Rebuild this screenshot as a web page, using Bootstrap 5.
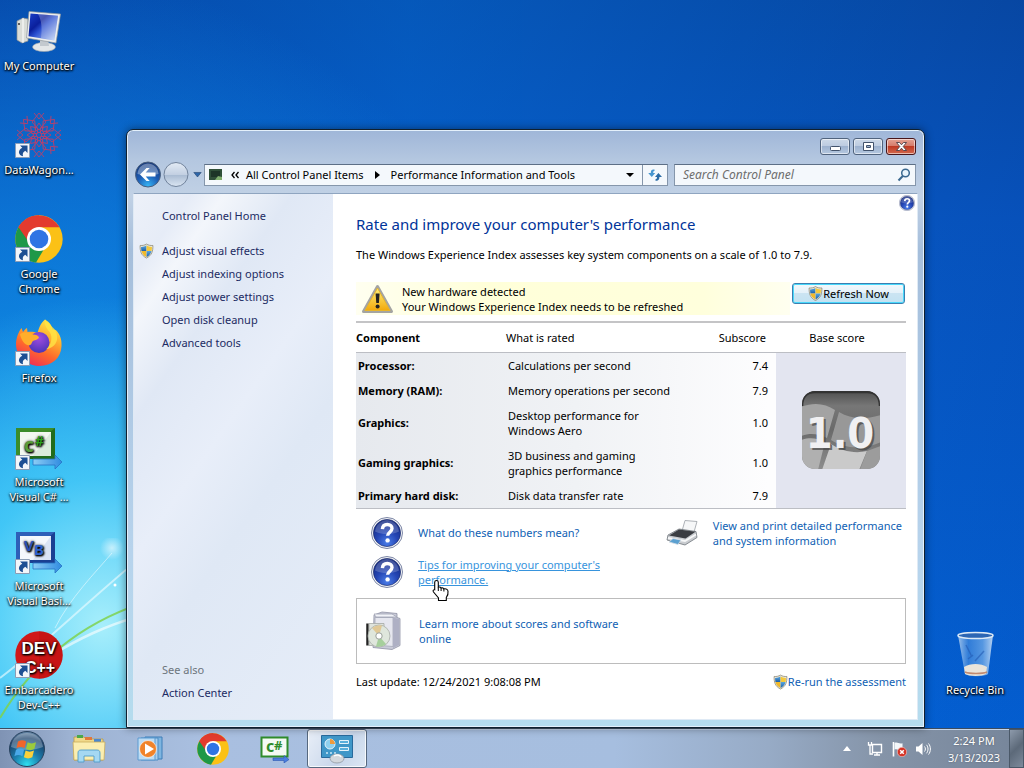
<!DOCTYPE html>
<html lang="en">
<head>
<meta charset="utf-8">
<meta name="viewport" content="width=device-width, initial-scale=1">
<title>Performance Information and Tools</title>
<link href="https://cdn.jsdelivr.net/npm/bootstrap@5.3.0/dist/css/bootstrap.min.css" rel="stylesheet">
<style>
  body { font-family: "Noto Sans", "Open Sans", sans-serif; font-size: 11px; line-height: 15px; color: #000; background: #0a57b8; }
  a { color: #0f5fb4; text-decoration: none; }
  a:hover, a.hovered { color: #3794dd; text-decoration: underline; }
  svg { display: block; flex: none; }
  svg text { font-family: "Noto Sans", sans-serif; }

  /* desktop */
  .wallpaper {
    background:
      radial-gradient(ellipse 300px 330px at 10% 86%, rgba(175,242,252,.95), rgba(80,210,250,.75) 45%, rgba(30,170,245,0) 100%),
      radial-gradient(ellipse 560px 640px at 4% 84%, #1cb4f2, rgba(16,140,228,.8) 45%, rgba(10,90,200,0) 100%),
      linear-gradient(90deg, rgba(0,70,180,.3), rgba(0,110,220,.35) 40%, rgba(0,40,130,.15) 100%),
      linear-gradient(180deg, #084ca8, #0858c4 30%, #0466dc 100%);
  }
  .streaks { left: 0; bottom: 0; width: 140px; height: 190px; }
  .icon-col { width: 78px; }
  .bin-col { margin-right: 10px; }
  .desk-icon { height: 104px; padding-top: 7px; color: #fff; text-align: center; text-shadow: 1px 1px 2px #000, 0 1px 2px #000, 0 0 3px rgba(0,0,0,.6); }
  .desk-icon:hover { color: #fff; text-decoration: none; }
  .desk-icon svg { margin: 0 auto 3px; }
  .desk-icon span { white-space: nowrap; }
  .dev-logo text { font-family: "Liberation Sans", sans-serif; }

  /* window */
  .win {
    left: 126px; right: 99px; top: 129px; bottom: 0;
    border: 1px solid #10202f; border-radius: 7px 7px 0 0;
    box-shadow: inset 0 0 0 1px #e4f0fb, 0 0 8px rgba(0,0,0,.45);
    background: linear-gradient(180deg, #9fb6d8 0, #b4c7e0 30px, #c1d1e5 66px, #a5bedb 120px, #b7d3ec 420px, #b5dcee 100%);
    padding: 0 6px 7px;
  }
  .caption-row { height: 30px; padding: 8px 2px 0; gap: 3px; }
  .cap-btn {
    width: 30px; height: 17px; padding: 0; border: 1px solid #50637d; border-radius: 3px;
    background: linear-gradient(#cdd9e8, #bccbe0 48%, #9db2cf 50%, #b5c8e0); box-shadow: inset 0 0 0 1px rgba(255,255,255,.55);
  }
  .cap-close { border-color: #47161b; background: linear-gradient(#e5a394, #d57a69 48%, #bf3a24 50%, #d2694e); }
  .nav-row { height: 33px; padding: 0 2px 4px 1px; }
  .nav-row button { border: 0; background: none; padding: 0; }
  .addr, .srch { height: 22px; border: 1px solid #8596ab; border-top-color: #5d6f86; background: #f4f8fc; }
  .addr { flex: 1 1 auto; margin-left: 2px; }
  .addr ol { gap: 7px; }
  .addr a { color: #000; }
  .addr .go { width: 25px; height: 20px; border-left: 1px solid #8596ab; }
  .srch { flex: 0 0 242px; margin-left: 6px; padding: 0 4px 0 8px; }
  .srch input { width: 100%; min-width: 0; border: 0; background: none; padding: 0; outline: 0; font-style: italic; font-size: 12px; }
  .srch input::placeholder { color: #6d6d6d; opacity: 1; }

  .client { background: #fff; border: 1px solid #dfeaf5; border-top-color: #8fa5c0; }
  .side {
    flex: 0 0 199px; padding: 14px 12px 19px 5px;
    background: linear-gradient(125deg, #edf1f9 0, #e6ecf7 10%, #f3f6fb 16%, #e0e8f5 28%, #e8eef9 45%, #dfe8f5 60%, #e6edf8 100%);
  }
  .side a { color: #1c2b63; }
  .side li { display: flex; gap: 8px; height: 23px; align-items: center; }
  .side li::before { content: ""; width: 15px; }
  .side li.shielded::before { display: none; }
  .side .indent { padding-left: 23px; }

  .page { flex: 1 1 auto; min-width: 0; padding: 19px 11px 0 23px; }
  .page h1 { font-size: 15px; line-height: 22px; color: #003399; margin: 0 0 12px; font-weight: 400; }
  .help-corner { right: 2px; top: 1px; padding: 0; border: 0; background: none; }
  .notice { background: linear-gradient(90deg, #fffff0, #ffffd9 30%, #ffffdc 80%, #fffff0); height: 33px; padding-left: 5px; gap: 8px; }
  .refresh {
    width: 113px; height: 21px; padding: 0; line-height: 15px; color: #000; margin: 1px 1px 0 2px;
    border: 1px solid #3c7fb1; border-radius: 3px; box-shadow: inset 0 0 0 1px #48d8fb;
    background: linear-gradient(#f2f8fc, #e4f1f9 48%, #cbe4f2 50%, #c2e2f2);
  }
  .scores { width: 100%; margin: 6px 0 0; border-top: 2px solid #c4c4c6; border-bottom: 1px solid #bcbec4; table-layout: fixed; }
  .scores thead th { font-weight: 400; height: 30px; padding: 0; border-bottom: 1px solid #bcbec4; }
  .scores thead th:first-child { font-weight: 700; }
  .scores tbody { background: linear-gradient(90deg, #e6e9ee 0, #f0f2f5 40%, #fdfdfe 75%); }
  .scores tbody th, .scores tbody td { padding: 5px 0 5px 2px; vertical-align: middle; }
  .scores tbody th { font-weight: 700; }
  .scores .num { text-align: right; padding-right: 10px; }
  .scores tbody .num { padding-right: 8px; }
  .scores tbody .base { background: #e3e5f0; padding: 0; }
  .scores .base text { font-family: "DejaVu Sans Condensed", "DejaVu Sans", sans-serif; }
  .links { padding: 8px 0 0 15px; }
  .tip-link { height: 32px; gap: 15px; margin-bottom: 7px; }
  .more-box { border: 1px solid #bcbcbc; height: 66px; margin-top: 3px; padding-left: 6px; gap: 12px; }
  .status-row { margin-top: 10px; }
  .pointer { left: 14px; top: 22px; }

  /* taskbar */
  .taskbar { height: 40px; border-top: 1px solid #3c4c60; box-shadow: inset 0 1px 0 #c6d6ea; background: linear-gradient(90deg, #7f93b4 0, #9db2d2 70px, #a9bfe0 200px, #a6bedf 60%, #97abc6 75%, #8594a8 86%, #76859a 100%); }
  .taskbar button { border: 0; background: none; padding: 0; }
  .start { width: 54px; margin-right: 5px; }
  .taskbar .task { width: 60px; height: 39px; margin-right: 2px; }
  .taskbar .task.active-task { border: 1px solid #56687f; border-radius: 3px; box-shadow: inset 0 0 0 1px rgba(255,255,255,.8); background: linear-gradient(120deg, #e9eff8, #c8d6ea 60%, #dce7f4); }
  .clock { color: #fff; width: 70px; line-height: 17px; text-align: center; text-shadow: 0 0 2px rgba(0,0,0,.35); }
  .taskbar .peek { width: 15px; height: 39px; border: 1px solid #4a5868; background: linear-gradient(135deg, #8d9aab, #5c6979 50%, #7d8a9b); }
</style>
</head>
<body>

<svg width="0" height="0" class="position-absolute" aria-hidden="true">
  <defs>
    <linearGradient id="gShieldB" x1="0" y1="0" x2="0" y2="1"><stop offset="0" stop-color="#5aa7e0"/><stop offset="1" stop-color="#1b5ea8"/></linearGradient>
    <radialGradient id="gHelp" cx=".5" cy=".85" r=".8"><stop offset="0" stop-color="#4a7de8"/><stop offset=".5" stop-color="#2445b4"/><stop offset="1" stop-color="#152a80"/></radialGradient>
    <radialGradient id="gBack" cx=".5" cy=".95" r=".9"><stop offset="0" stop-color="#35b4f5"/><stop offset=".5" stop-color="#1d5cb4"/><stop offset="1" stop-color="#173a7c"/></radialGradient>
    <linearGradient id="gFwd" x1="0" y1="0" x2="0" y2="1"><stop offset="0" stop-color="#e3ebf5"/><stop offset=".5" stop-color="#c3d0e2"/><stop offset=".52" stop-color="#a9bbd2"/><stop offset="1" stop-color="#dbe6f3"/></linearGradient>
    <linearGradient id="gScreen" x1="0" y1="0" x2="1" y2="1"><stop offset="0" stop-color="#1a3fc8"/><stop offset=".35" stop-color="#0a1f9c"/><stop offset=".5" stop-color="#2b50d0"/><stop offset="1" stop-color="#c9dcf8"/></linearGradient>
    <linearGradient id="gFox" x1=".8" y1="0" x2=".3" y2="1"><stop offset="0" stop-color="#fff04a"/><stop offset=".35" stop-color="#ffb02e"/><stop offset=".65" stop-color="#ff6a2b"/><stop offset="1" stop-color="#ee2c58"/></linearGradient>
    <radialGradient id="gGlobe" cx=".5" cy=".3" r=".7"><stop offset="0" stop-color="#a04be0"/><stop offset="1" stop-color="#4a35b8"/></radialGradient>
    <linearGradient id="gTile" x1="0" y1="0" x2="0" y2="1"><stop offset="0" stop-color="#4c4c4c"/><stop offset=".2" stop-color="#777"/><stop offset=".5" stop-color="#6a6a6a"/><stop offset="1" stop-color="#8d8d8d"/></linearGradient>
    <linearGradient id="gArrow" x1="0" y1="0" x2="1" y2="0"><stop offset="0" stop-color="#8ccdf5"/><stop offset="1" stop-color="#2f8be0"/></linearGradient>
    <radialGradient id="gOrb" cx=".5" cy=".95" r=".95"><stop offset="0" stop-color="#2fe0f0"/><stop offset=".4" stop-color="#1c7fae"/><stop offset=".8" stop-color="#1a3f68"/><stop offset="1" stop-color="#6f8fae"/></radialGradient>
    <radialGradient id="gGlow"><stop offset="0" stop-color="#fff" stop-opacity=".6"/><stop offset="1" stop-color="#fff" stop-opacity="0"/></radialGradient>
    <linearGradient id="gWarn" x1="0" y1="0" x2="0" y2="1"><stop offset="0" stop-color="#fff07a"/><stop offset="1" stop-color="#f2a90c"/></linearGradient>
    <linearGradient id="gBin" x1="0" y1="0" x2="1" y2="0"><stop offset="0" stop-color="#b9d4f0" stop-opacity=".85"/><stop offset=".3" stop-color="#4f93e0" stop-opacity=".6"/><stop offset=".7" stop-color="#78b0ea" stop-opacity=".7"/><stop offset="1" stop-color="#d5e6f8" stop-opacity=".85"/></linearGradient>
  </defs>
  <symbol id="shield" viewBox="0 0 16 16">
    <path d="M8 .6c2 1.300 4.300 1.700 6.800 1.500.2 6-1 10.500-6.800 13.400C2.200 12.600 1 8.100 1.200 2.100 3.700 2.300 6 1.900 8 .6z" fill="#e9e6da" stroke="#8a8672" stroke-width=".8"/>
    <path d="M7.900 2.200v5.800H2.600c-.3-1.400-.4-2.800-.4-4.300 2.200.1 4-.4 5.700-1.500z" fill="url(#gShieldB)"/>
    <path d="M8.100 2.200v5.800h5.300c.3-1.400.4-2.800.4-4.300-2.200.1-4-.4-5.700-1.500z" fill="#f4c93c"/>
    <path d="M7.900 8H2.600c.8 3 2.400 4.900 5.300 6.400z" fill="#f0b92b"/>
    <path d="M8.100 8h5.300c-.8 3-2.400 4.900-5.300 6.400z" fill="url(#gShieldB)"/>
  </symbol>
  <symbol id="help" viewBox="0 0 32 32">
    <circle cx="16" cy="16" r="15.500" fill="#f4f5f8" stroke="#7d87a6"/>
    <circle cx="16" cy="16" r="13.600" fill="url(#gHelp)" stroke="#14245f" stroke-width=".6"/>
    <path d="M4 14.500C5 7 11 3 16 3s11 4 12 11.500c-8 3.500-16 3.500-24 0z" fill="#fff" opacity=".2"/>
    <path d="M11.400 12.200c.2-3 2-4.700 4.900-4.700 2.800 0 4.700 1.600 4.700 4 0 3.600-4.400 3.800-4.400 7.300" fill="none" stroke="#fff" stroke-width="3.400"/>
    <circle cx="16.600" cy="23.400" r="2.200" fill="#fff"/>
  </symbol>
  <symbol id="shortcut" viewBox="0 0 15 15">
    <path d="M.5.500h14v14H.5z" fill="#f3f6fa" stroke="#8c9db5"/>
    <path d="M5 2.500H12.500V10L10.300 7.800C8.300 8.800 7.300 10.500 8 13.200 3.300 12.400 2.200 7.500 7.300 4.800z" fill="#1d4f93"/>
  </symbol>
  <symbol id="chrome" viewBox="0 0 48 48">
    <circle cx="24" cy="24" r="23.700" fill="#fbc116"/>
    <path d="M24 24 3.500 12.200A23.700 23.700 0 0 0 21 47.500L31.500 30z" fill="#1e9848"/>
    <path d="M24 24 3.500 12.200A23.700 23.700 0 0 1 44.500 12.300H24z" fill="#e33b2e"/>
    <path d="M3.500 12.200 14 30 24 24z" fill="#1e9848"/>
    <path d="M3.500 12.200A23.700 23.700 0 0 1 24 .3l0 12-10.400 6.200-.2 8z" fill="#e33b2e"/>
    <circle cx="24" cy="24" r="12" fill="#fff"/><circle cx="24" cy="24" r="9.300" fill="#2f74e4"/>
  </symbol>
</svg>

<div class="d-flex flex-column vh-100 overflow-hidden">
  <main class="wallpaper position-relative flex-grow-1 d-flex justify-content-between">
    <svg class="streaks position-absolute" viewBox="0 0 140 190" aria-hidden="true">
      <path d="M0 140C40 110 80 70 140 20" stroke="#e8fbff" stroke-width="2" fill="none" opacity=".65"/>
      <path d="M50 118C80 100 105 88 140 78" stroke="#fff" stroke-width="2.500" fill="none" opacity=".6"/>
      <path d="M0 180C30 130 75 88 140 66" stroke="#7fd24e" stroke-width="2" fill="none" opacity=".85"/>
      <path d="M55 90C70 60 95 35 112 15" stroke="#fff" stroke-width="1" fill="none" opacity=".5"/>
      <circle cx="112" cy="10" r="12" fill="url(#gGlow)"/><circle cx="115" cy="47" r="1.500" fill="#fff"/>
    </svg>

    <nav class="icon-col position-relative" aria-label="Desktop">
      <a href="#" class="desk-icon d-block">
        <svg width="48" height="48" viewBox="0 0 48 48">
          <path d="M2 14 8 11l5 1v22l-6 2-5-3z" fill="#d9dcd8" stroke="#8b8f90" stroke-width=".7"/><path d="M8 11v25" stroke="#fff"/><circle cx="4" cy="17" r="1" fill="#333"/>
          <ellipse cx="29" cy="40" rx="11.500" ry="4.500" fill="#e4e7e8" stroke="#9aa3aa" stroke-width=".6"/><path d="M25 32h8l1 7h-9z" fill="#c3c9ce"/>
          <path d="M14 4.500 45.500 7 41 36 11.500 31z" fill="#eceeee" stroke="#8f969c" stroke-width=".7"/>
          <path d="M15.500 6.500 43 8.700 39.300 33.500 13.500 29.200z" fill="url(#gScreen)"/>
          <path d="M23 7c4 7 4 15 3 24l13 2.300L43 8.700z" fill="#fff" opacity=".25"/>
        </svg><span>My Computer</span></a>
      <a href="#" class="desk-icon d-block">
        <svg width="48" height="48" viewBox="0 0 48 48" fill="none" stroke="#b8406c" stroke-width=".9">
          <g id="petals"><path d="M24 2 31 11 24 19 17 11zM24 12l4 6-4 4-4-4zM19 2l5 6 5-6"/></g>
          <use href="#petals" transform="rotate(45 24 24)"/><use href="#petals" transform="rotate(90 24 24)"/><use href="#petals" transform="rotate(135 24 24)"/><use href="#petals" transform="rotate(180 24 24)"/><use href="#petals" transform="rotate(225 24 24)"/><use href="#petals" transform="rotate(270 24 24)"/><use href="#petals" transform="rotate(315 24 24)"/>
          <use href="#shortcut" x="0" y="32" width="15" height="15" stroke="none"/>
        </svg><span>DataWagon...</span></a>
      <a href="#" class="desk-icon d-block">
        <svg width="48" height="48" viewBox="0 0 48 48"><use href="#chrome" width="48" height="48"/><use href="#shortcut" x="0" y="32" width="15" height="15"/></svg><span>Google<br>Chrome</span></a>
      <a href="#" class="desk-icon d-block">
        <svg width="48" height="48" viewBox="0 0 48 48">
          <path d="M30 .5c5 3 7 6.500 7.500 10 1.500-.3 2.500 0 3.500.8 4 4 6 9 5.500 16C46 39 37 47 24.500 47S1 37.500 1 25.500C1 19 3.500 13 6.500 9l1.500 4c1-1.500 2.500-3 4-4l.5 4c3-.5 7-.3 10 1C24 9 25.500 4 30 .5z" fill="url(#gFox)"/>
          <circle cx="24" cy="23.500" r="10.500" fill="url(#gGlobe)"/>
          <path d="M5 15c4-2.500 10-2 13 .5 3 0 5.500 1 6 3-1 2.500-5 2.500-6.500 4-1 1.300-.7 3-2.500 3.500C11 28 6 21 5 15z" fill="#ffae2b"/>
          <path d="M30 .5c-1 6 2 9 5 13 3 5 1 13-4 17 9-2 12-8 11-14C41 9 36 8 30 .5z" fill="#ffe545" opacity=".8"/>
          <use href="#shortcut" x="0" y="32" width="15" height="15"/>
        </svg><span>Firefox</span></a>
      <a href="#" class="desk-icon d-block">
        <svg width="48" height="48" viewBox="0 0 48 48">
          <path d="M1 5h39v31H1z" fill="#3b8c2a"/><path d="M40 5v31H1z" fill="#236b1c"/><path d="M5 9h31v24H5z" fill="#f2f8f0"/><path d="M36 9v24H18z" fill="#dcebdc"/>
          <text x="9" y="29" font-size="19" font-weight="700" fill="#5a9c3a">c</text><text x="20" y="23" font-size="14" font-weight="700" fill="#2fa01e">#</text>
          <path d="M18 36h22v-4l7 7-7 7v-4H18z" fill="url(#gArrow)" stroke="#2774c4" stroke-width=".8"/>
          <use href="#shortcut" x="0" y="32" width="15" height="15"/>
        </svg><span>Microsoft<br>Visual C# ...</span></a>
      <a href="#" class="desk-icon d-block">
        <svg width="48" height="48" viewBox="0 0 48 48">
          <path d="M1 5h39v31H1z" fill="#2e5fb8"/><path d="M40 5v31H1z" fill="#1a3f92"/><path d="M5 9h31v24H5z" fill="#f4f7fc"/><path d="M36 9v24H18z" fill="#dbe4f4"/>
          <text x="9" y="24" font-size="15" font-weight="700" fill="#2b50b4">V</text><text x="19" y="28" font-size="15" font-weight="700" fill="#2f62cc">B</text>
          <path d="M18 36h22v-4l7 7-7 7v-4H18z" fill="url(#gArrow)" stroke="#2774c4" stroke-width=".8"/>
          <use href="#shortcut" x="0" y="32" width="15" height="15"/>
        </svg><span>Microsoft<br>Visual Basi...</span></a>
      <a href="#" class="desk-icon d-block">
        <svg class="dev-logo" width="48" height="48" viewBox="0 0 48 48">
          <circle cx="24" cy="24" r="23.700" fill="#d01818"/><path d="M24 .3a23.700 23.700 0 0 1 0 47.400z" fill="#b81010" opacity=".4"/>
          <text x="24" y="23" font-size="17" font-weight="700" fill="#fff" text-anchor="middle">DEV</text><text x="25" y="42" font-size="16" font-weight="700" fill="#fff" text-anchor="middle">C++</text>
          <use href="#shortcut" x="0" y="32" width="15" height="15"/>
        </svg><span>Embarcadero<br>Dev-C++</span></a>
    </nav>

    <nav class="icon-col bin-col align-self-end" aria-label="Recycle">
      <a href="#" class="desk-icon d-block">
        <svg width="48" height="48" viewBox="0 0 48 48">
          <path d="M7 4h35l-5 39c-3 3-20 3-23 0z" fill="url(#gBin)"/>
          <path d="M13 36c6-4 17-4 23 0l-1 7c-4 2.500-17 2.500-21 0z" fill="#e9e4da"/>
          <path d="M14 41c5 2 17 2 22 0" stroke="#c08a70" stroke-width="1.500" fill="none"/>
          <ellipse cx="24.500" cy="4.500" rx="17.500" ry="3" fill="#2c66b4" stroke="#dce9f6" stroke-width="1.500"/>
          <path d="M15 14l6 12M33 20l-9 10M17 28l5-4" stroke="#245cb4" stroke-width="1.500" opacity=".6"/>
        </svg><span>Recycle Bin</span></a>
    </nav>

    <section class="win position-absolute d-flex flex-column" aria-label="Performance Information and Tools">
      <div class="caption-row d-flex justify-content-end">
        <button class="cap-btn" type="button" aria-label="Minimize"><svg width="28" height="15"><rect x="9.500" y="7.500" width="10" height="4" rx="1" fill="#fff" stroke="#42536c"/></svg></button>
        <button class="cap-btn" type="button" aria-label="Maximize"><svg width="28" height="15"><path d="M9.500 3.500h10v8h-10zM12.500 6.500h4v2h-4z" fill="#fff" fill-rule="evenodd" stroke="#42536c"/></svg></button>
        <button class="cap-btn cap-close" type="button" aria-label="Close"><svg width="28" height="15"><path d="M9.500 3.500h3l2 2.300 2-2.300h3l-3.300 4 3.300 4h-3l-2-2.300-2 2.300h-3l3.300-4z" fill="#fff" stroke="#4d4046" stroke-width=".9"/></svg></button>
      </div>
      <div class="nav-row d-flex align-items-center">
        <button type="button" aria-label="Back"><svg width="28" height="27" viewBox="0 0 28 27"><circle cx="14" cy="13.500" r="12.500" fill="url(#gBack)" stroke="#4a5f7e"/><path d="M3.500 13C4 6 9 2.500 14 2.500S24 6 24.500 13c-7 2-14 2-21 0z" fill="#fff" opacity=".35"/><path d="M6 13.500l6.500-6.500h3.200l-4 4.500h9.800v4h-9.800l4 4.500h-3.200z" fill="#fff"/></svg></button>
        <button type="button" aria-label="Forward"><svg width="27" height="27" viewBox="0 0 27 27"><circle cx="14" cy="13.500" r="12" fill="url(#gFwd)" stroke="#71839c"/></svg></button>
        <button type="button" class="ms-1" aria-label="Recent pages"><svg width="9" height="7" viewBox="0 0 11 8"><path d="M1 1.500h9L5.500 7z" fill="#2c65a8" stroke="#2a4a74" stroke-width=".8"/></svg></button>
        <div class="addr d-flex align-items-center">
          <svg width="14" height="12" viewBox="0 0 14 12" class="ms-1 me-2"><path d="M0 0h13v11H0z" fill="#2f4f38"/><path d="M2 2h9v6H2z" fill="#1d3527"/><path d="M6 11l3-4 4 1v3z" fill="#7fae6d"/></svg>
          <ol class="d-flex align-items-center list-unstyled mb-0 flex-grow-1 text-nowrap">
            <li><svg width="8" height="8" viewBox="0 0 8 8" role="img" aria-label="More"><path d="M3.500 1 1 4l2.500 3M7.500 1 5 4l2.500 3" fill="none" stroke="#000" stroke-width="1.300"/></svg></li>
            <li><a href="#">All Control Panel Items</a></li>
            <li class="px-1"><svg width="5" height="8"><path d="M0 0l5 4-5 4z"/></svg></li>
            <li><a href="#">Performance Information and Tools</a></li>
          </ol>
          <button type="button" class="me-1 pe-1" aria-label="Previous locations"><svg width="8" height="4"><path d="M0 0h8L4 4z"/></svg></button>
          <button type="button" class="go d-flex align-items-center justify-content-center" aria-label="Refresh"><svg width="16" height="14" viewBox="0 0 16 14"><path d="M7.500 1.500C5 1 3.800 2 3.800 5H1.200l3.600 4 3.400-4H6.200c0-1.500.3-2 1.300-2z" fill="#4796cf"/><path d="M8.500 12.700c2.500.5 3.900-.7 3.900-3.700H15l-3.600-4L8 9h2c0 1.500-.4 2.200-1.500 2.200z" fill="#2a6ba6"/></svg></button>
        </div>
        <div class="srch d-flex align-items-center">
          <input type="search" placeholder="Search Control Panel" aria-label="Search Control Panel">
          <svg width="14" height="14" viewBox="0 0 14 14"><circle cx="8.500" cy="5" r="3.800" fill="#e8f4fc" stroke="#3a688f" stroke-width="1.500"/><path d="M5.800 8 1.500 12.500" stroke="#3a688f" stroke-width="2"/></svg>
        </div>
      </div>

      <div class="client d-flex flex-grow-1 position-relative">
        <aside class="side d-flex flex-column justify-content-between">
          <div>
            <a href="#" class="indent d-block mb-3">Control Panel Home</a>
            <ul class="list-unstyled mb-0">
              <li class="shielded"><svg width="15" height="16"><use href="#shield" width="15" height="16"/></svg><a href="#">Adjust visual effects</a></li>
              <li><a href="#">Adjust indexing options</a></li>
              <li><a href="#">Adjust power settings</a></li>
              <li><a href="#">Open disk cleanup</a></li>
              <li><a href="#">Advanced tools</a></li>
            </ul>
          </div>
          <div class="indent"><div class="text-secondary mb-2">See also</div><a href="#">Action Center</a></div>
        </aside>

        <article class="page">
          <button class="help-corner position-absolute" type="button" aria-label="Help"><svg width="16" height="16"><use href="#help" width="16" height="16"/></svg></button>
          <h1>Rate and improve your computer's performance</h1>
          <p class="mb-0">The Windows Experience Index assesses key system components on a scale of 1.0 to 7.9.</p>
          <div class="d-flex align-items-start mt-3 pt-1">
            <div class="notice d-flex align-items-center flex-grow-1">
              <svg width="33" height="30" viewBox="0 0 33 30"><path d="M16.500 2.500 30.500 27.500h-28z" fill="#fff" stroke="#a4a4a2" stroke-width="3" stroke-linejoin="round"/><path d="M16.500 4 29 26.500H4z" fill="url(#gWarn)" stroke="#e8b52a" stroke-linejoin="round"/><path d="M14.600 9.500h4l-.7 9.500h-2.600z" fill="#222"/><circle cx="16.600" cy="22.500" r="2" fill="#222"/></svg>
              <div>New hardware detected<br>Your Windows Experience Index needs to be refreshed</div>
            </div>
            <button class="refresh d-flex align-items-center justify-content-center" type="button"><svg width="15" height="15"><use href="#shield" width="15" height="15"/></svg>Refresh Now</button>
          </div>

          <table class="scores">
            <colgroup><col style="width:150px"><col><col style="width:70px"><col style="width:130px"></colgroup>
            <thead><tr><th scope="col">Component</th><th scope="col">What is rated</th><th scope="col" class="num">Subscore</th><th scope="col" class="text-center pe-2">Base score</th></tr></thead>
            <tbody>
              <tr><th scope="row">Processor:</th><td>Calculations per second</td><td class="num">7.4</td>
                <td class="base" rowspan="5">
                  <svg class="mx-auto" width="80" height="80" viewBox="0 0 80 80" role="img" aria-label="Base score 1.0">
                    <clipPath id="tileClip"><rect x="1" y="1" width="78" height="78" rx="13"/></clipPath>
                    <g clip-path="url(#tileClip)">
                      <path d="M0 0h80v80H0z" fill="url(#gTile)"/>
                      <path d="M0 17C12 12 24 13 34 20L26 48C16 43 8 43 0 46z" fill="#a3a3a3"/><path d="M0 50c9-3 16-2 24 2L17 80H0z" fill="#b0b0b0"/>
                      <path d="M38 22c12 7 24 8 42 3v27c-18 8-36 7-50-2z" fill="#989898"/><path d="M30 54c10 7 24 10 36 7l-8 19H21z" fill="#cacaca"/>
                      <path d="M66 61l14-5v24H59z" fill="#9c9c9c"/>
                      <path d="M1 16C1 6 7 2 14 2h52c8 0 13 5 13 14" fill="none" stroke="#333" stroke-width="2.500"/>
                    </g>
                    <text x="41" y="60" font-size="43" font-weight="700" fill="#444" text-anchor="middle" opacity=".7">1.0</text>
                    <text x="39" y="58" font-size="43" font-weight="700" fill="#f0f0f2" text-anchor="middle">1.0</text>
                  </svg>
                </td></tr>
              <tr><th scope="row">Memory (RAM):</th><td>Memory operations per second</td><td class="num">7.9</td></tr>
              <tr><th scope="row">Graphics:</th><td>Desktop performance for<br>Windows Aero</td><td class="num">1.0</td></tr>
              <tr><th scope="row">Gaming graphics:</th><td>3D business and gaming<br>graphics performance</td><td class="num">1.0</td></tr>
              <tr><th scope="row">Primary hard disk:</th><td>Disk data transfer rate</td><td class="num">7.9</td></tr>
            </tbody>
          </table>

          <div class="links d-flex justify-content-between align-items-start">
            <div>
              <div class="tip-link d-flex align-items-center"><svg width="32" height="32"><use href="#help" width="32" height="32"/></svg><a href="#">What do these numbers mean?</a></div>
              <div class="tip-link d-flex align-items-center">
                <svg width="32" height="32"><use href="#help" width="32" height="32"/></svg>
                <div class="position-relative"><a href="#" class="hovered">Tips for improving your computer's<br>performance.</a>
                  <svg class="pointer position-absolute" width="18" height="23" viewBox="0 0 18 23" aria-hidden="true"><path d="M4.500 1.500c1.200 0 1.800.6 1.800 1.800v5c1.200-.5 2.200-.3 2.800.7 1-.4 2-.1 2.600.9 1.300-.4 3.800-.2 4.300 2.100.3 2-.2 4.500-1.700 6.500v3H6.500v-2.500L1.500 13C.6 11.700 1.300 10.500 2.700 10.800V3.300c0-1.200.6-1.800 1.800-1.800z" fill="#fff" stroke="#000" stroke-width="1.100"/><path d="M6.300 8.500v3.500M9.100 9v3M11.900 10v2.500" stroke="#000"/></svg>
                </div>
              </div>
            </div>
            <div class="tip-link d-flex align-items-center me-1">
              <svg width="32" height="28" viewBox="0 0 32 28"><path d="M16 12 19 1.500l12 1L28 13z" fill="#f6f7f8" stroke="#9aa0a6" stroke-width=".8"/><path d="M2 16 13 10l17 2.500 1 6-12 7.500L1 21z" fill="#c9ccd0" stroke="#6f757b" stroke-width=".8"/><path d="M3 16.500 13 10.500l16.500 2.300-10 6.700z" fill="#3a3d42"/><path d="M2 19l17 3 11-6.500" stroke="#f7f8f9" stroke-width="1.800" fill="none"/><path d="M7 19.500l8 1.500-3 4.500-9-2.500z" fill="#5ba0d0" stroke="#d5dde4" stroke-width=".8"/></svg>
              <a href="#">View and print detailed performance<br>and system information</a>
            </div>
          </div>

          <div class="more-box d-flex align-items-center">
            <svg width="44" height="42" viewBox="0 0 44 42"><path d="M11 5 19 2l15 1.500v4l3 1v27l-8 4-19-2z" fill="#c9cbd8" stroke="#8f92a4" stroke-width=".8"/><path d="M12 7.500h18v29l-18-1.500z" fill="#e6e7ef" stroke="#a5a8b8" stroke-width=".8"/><path d="M30 7.500l6 1.500v26l-6 3z" fill="#aeb0c4"/><path d="M11 4h18l5 3H13z" fill="#f2f3f8" stroke="#9fa2b2" stroke-width=".8"/><path d="M4.500 13.500v22" stroke="#222" stroke-width="2.500"/><path d="M6 13.500h15v22H6z" fill="#dfe3dc" stroke="#a4a8a4" stroke-width=".8"/><circle cx="16" cy="26" r="11" fill="#dfe6dc" stroke="#a7aca7" stroke-width=".8"/><path d="M16 26 9 18a11 11 0 0 1 10-2.500z" fill="#e0c896"/><path d="M16 26l7 8a11 11 0 0 1-10 2.500z" fill="#a6cf9c"/><circle cx="16" cy="26" r="3.200" fill="#fff" stroke="#9a9f9a"/></svg>
            <a href="#">Learn more about scores and software<br>online</a>
          </div>
          <div class="status-row d-flex justify-content-between align-items-center">
            <span>Last update: 12/24/2021 9:08:08 PM</span>
            <a href="#" class="d-flex align-items-center"><svg width="15" height="16"><use href="#shield" width="15" height="16"/></svg>Re-run the assessment</a>
          </div>
        </article>
      </div>
    </section>
  </main>

  <footer class="taskbar d-flex align-items-center flex-shrink-0">
    <button class="start d-flex justify-content-center" type="button" aria-label="Start"><svg width="38" height="38" viewBox="0 0 38 38"><circle cx="19" cy="19" r="17.500" fill="url(#gOrb)" stroke="#28425e"/><path d="M3 17C4 8 11 3 19 3s15 5 16 14c-10 4-22 4-32 0z" fill="#fff" opacity=".28"/><path d="M10 11.500c3-1.600 5.500-1.600 8.200 0L16.500 18c-2.700-1.500-5.200-1.500-8 0z" fill="#f0652a"/><path d="M19.600 12.300c2.700 1.500 5.400 1.500 8.400 0L26.400 19c-2.900 1.500-5.700 1.500-8.400 0z" fill="#9bcb3c"/><path d="M8 19.700c2.800-1.500 5.400-1.500 8.100 0l-1.700 6.500c-2.700-1.500-5.200-1.500-8 0z" fill="#4aa8e8"/><path d="M17.600 20.600c2.700 1.500 5.400 1.500 8.400 0l-1.700 6.700c-2.800 1.500-5.600 1.500-8.400 0z" fill="#fbd13c"/></svg></button>
    <button class="task d-flex justify-content-center align-items-center" type="button" aria-label="Explorer"><svg width="34" height="32" viewBox="0 0 34 32"><path d="M2 4h10l2 2h17v21H2z" fill="#f0d98a" stroke="#b89b4c" stroke-width=".8"/><path d="M5 2h6v3H5z" fill="#4aa84a"/><path d="M13 4h7v3h-7z" fill="#e0783c"/><path d="M22 6h7v3h-7z" fill="#4a88d0"/><path d="M1 9h32l-1 18H2z" fill="#fbeeb0" stroke="#c9ac5c" stroke-width=".8"/><path d="M6 29V20c0-2 1-3 3-3h16c2 0 3 1 3 3v9h-6v-6H12v6z" fill="#a5d8f2" stroke="#4f9cca" stroke-width=".9"/></svg></button>
    <button class="task d-flex justify-content-center align-items-center" type="button" aria-label="Media Player"><svg width="28" height="28" viewBox="0 0 28 28"><path d="M8 2h17v22H8z" fill="#7fb5e0" stroke="#3f7fb8"/><path d="M4 3h17v22H4z" fill="#a9cfee" stroke="#4c8cc4"/><path d="M1 3h17v22H1z" fill="#bcdcf4" stroke="#5c9ad0"/><circle cx="11" cy="14" r="8.500" fill="#f0832a" stroke="#fff" stroke-width=".6"/><path d="M8 8.500 17 14l-9 5.500z" fill="#fff"/></svg></button>
    <button class="task d-flex justify-content-center align-items-center" type="button" aria-label="Chrome"><svg width="32" height="32"><use href="#chrome" width="32" height="32"/></svg></button>
    <button class="task d-flex justify-content-center align-items-center" type="button" aria-label="Visual C#"><svg width="30" height="28" viewBox="0 0 30 28"><path d="M1.500 2.500h26v19h-26z" fill="#f4faf4" stroke="#2f8c2c" stroke-width="2"/><text x="6" y="17" font-size="16" font-weight="700" fill="#2f8c2c">c</text><text x="14" y="15" font-size="13" font-weight="700" fill="#2f8c2c">#</text><path d="M13 23h11v-2.500l5 4-5 3.500v-2.500H13z" fill="#4b7fe0" stroke="#2b55b0" stroke-width=".6"/></svg></button>
    <button class="task active-task d-flex justify-content-center align-items-center" type="button" aria-label="Control Panel"><svg width="32" height="30" viewBox="0 0 32 30"><path d="M.5 1.500h31v22H.5z" fill="#3f97c8" stroke="#286a9c"/><circle cx="9" cy="10" r="5" fill="#8fd0ee" stroke="#e6f4fb"/><path d="M9 10V5a5 5 0 0 1 5 5z" fill="#f09a3c"/><path d="M18.500 6.500h9v3h-9zM18.500 13.500h9v3h-9z" fill="#5ab0dc" stroke="#e4f3fa"/><path d="M5 19h2M9 19h2M13 19h2" stroke="#cfe9f6" stroke-width="1.500"/><ellipse cx="16" cy="24.500" rx="7" ry="4.500" fill="#d3d8dd" stroke="#8f979f" stroke-width=".8"/><path d="M13 22c3-2 6-1 7 1" stroke="#fff" stroke-width="1.500" fill="none"/></svg></button>

    <div class="d-flex align-items-center ms-auto">
      <button type="button" class="me-3" aria-label="Show hidden icons"><svg width="8" height="5"><path d="M4 0l4 5H0z" fill="#fff"/></svg></button>
      <button type="button" class="me-2" aria-label="Network"><svg width="16" height="16" viewBox="0 0 16 16" fill="none" stroke="#fff"><path d="M5.500 3.500h9v8h-9zM7 14h6M10 12v2" stroke-width="1.400"/><path d="M1.500 1v3h3V1M3 4v9h3" stroke-width="1.300"/></svg></button>
      <button type="button" class="me-2" aria-label="Action Center"><svg width="16" height="16" viewBox="0 0 16 16"><path d="M2.500 1v14.500" stroke="#fff" stroke-width="1.600"/><path d="M3.500 2c3-1.500 4.500 1.500 8 .3v6.500c-3.500 1.200-5-1.500-8-.2z" fill="#f4f7fa"/><circle cx="11" cy="11" r="4.700" fill="#d63426" stroke="#f4d0cc" stroke-width=".6"/><path d="M9.200 9.200l3.600 3.600M12.800 9.200l-3.600 3.600" stroke="#fff" stroke-width="1.500"/></svg></button>
      <button type="button" class="me-2" aria-label="Volume"><svg width="16" height="16" viewBox="0 0 16 16"><path d="M1 5.500h2.500L7.500 2v12L3.500 10.500H1z" fill="#fff"/><path d="M9.500 5.500c1.200 1.500 1.200 3.500 0 5M11.500 3.800c2 2.500 2 6 0 8.500M13.500 2.500c2.500 3 2.500 8 0 11" stroke="#fff" fill="none"/></svg></button>
      <div class="clock">2:24 PM<br>3/13/2023</div>
      <button type="button" class="peek" aria-label="Show desktop"></button>
    </div>
  </footer>
</div>

<script src="https://cdn.jsdelivr.net/npm/bootstrap@5.3.0/dist/js/bootstrap.bundle.min.js"></script>
</body>
</html>
